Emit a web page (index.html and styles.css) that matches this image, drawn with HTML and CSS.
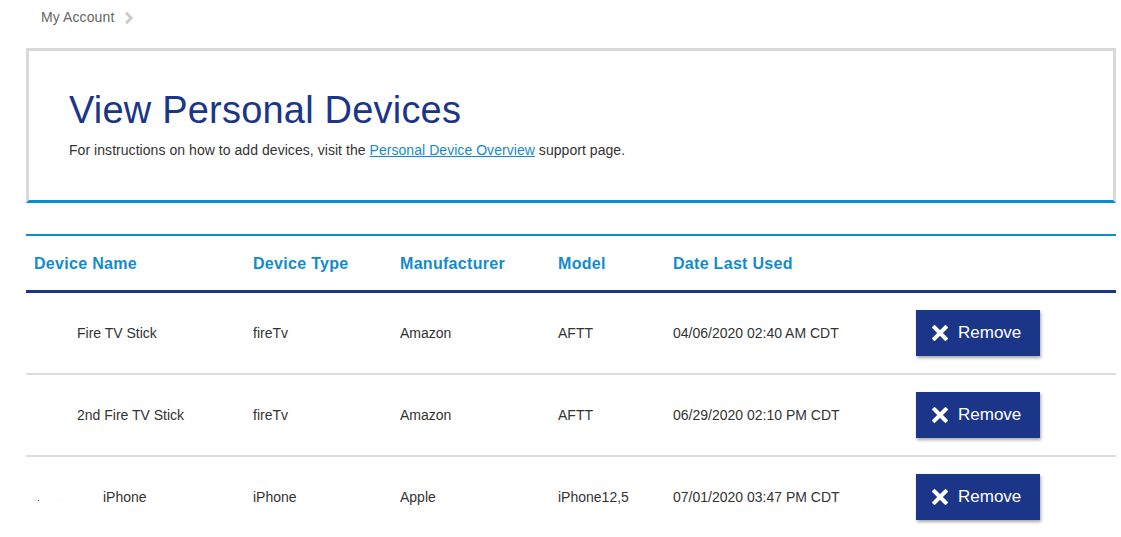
FILE: index.html
```html
<!DOCTYPE html>
<html lang="en">
<head>
<meta charset="utf-8">
<title>View Personal Devices</title>
<link rel="stylesheet" href="styles.css">
</head>
<body>
<div class="page">
  <nav class="crumbs">
    <a class="crumb" href="#">My Account</a>
    <svg class="chev" width="10" height="14" viewBox="0 0 10 14"><path d="M2 1.8 L7.2 7 L2 12.2" fill="none" stroke="#c9c9c9" stroke-width="2.8"/></svg>
  </nav>

  <section class="card">
    <h1 class="title">View Personal Devices</h1>
    <p class="intro">For instructions on how to add devices, visit the <a href="#" class="link">Personal Device Overview</a> support page.</p>
  </section>

  <div class="table">
    <div class="row head">
      <div class="cell first">Device Name</div>
      <div class="cell">Device Type</div>
      <div class="cell">Manufacturer</div>
      <div class="cell">Model</div>
      <div class="cell">Date Last Used</div>
      <div class="cell"></div>
    </div>
    <div class="row">
      <div class="cell name"><span class="thumb"></span>Fire TV Stick</div>
      <div class="cell">fireTv</div>
      <div class="cell">Amazon</div>
      <div class="cell">AFTT</div>
      <div class="cell">04/06/2020 02:40 AM CDT</div>
      <div class="cell"><button class="remove"><svg class="x" width="16" height="16" viewBox="0 0 16 16"><path d="M2.5 2.5 L13.5 13.5 M13.5 2.5 L2.5 13.5" stroke="#fff" stroke-width="4" stroke-linecap="square"/></svg>Remove</button></div>
    </div>
    <div class="row">
      <div class="cell name"><span class="thumb"></span>2nd Fire TV Stick</div>
      <div class="cell">fireTv</div>
      <div class="cell">Amazon</div>
      <div class="cell">AFTT</div>
      <div class="cell">06/29/2020 02:10 PM CDT</div>
      <div class="cell"><button class="remove"><svg class="x" width="16" height="16" viewBox="0 0 16 16"><path d="M2.5 2.5 L13.5 13.5 M13.5 2.5 L2.5 13.5" stroke="#fff" stroke-width="4" stroke-linecap="square"/></svg>Remove</button></div>
    </div>
    <div class="row">
      <div class="cell name"><span class="thumb wide"><i class="dot"></i><i class="dot faint"></i></span>iPhone</div>
      <div class="cell">iPhone</div>
      <div class="cell">Apple</div>
      <div class="cell">iPhone12,5</div>
      <div class="cell">07/01/2020 03:47 PM CDT</div>
      <div class="cell"><button class="remove"><svg class="x" width="16" height="16" viewBox="0 0 16 16"><path d="M2.5 2.5 L13.5 13.5 M13.5 2.5 L2.5 13.5" stroke="#fff" stroke-width="4" stroke-linecap="square"/></svg>Remove</button></div>
    </div>
  </div>
</div>
</body>
</html>
```

FILE: styles.css
```css
* { box-sizing: border-box; }
html, body { margin: 0; padding: 0; background: #fff; }
body {
  font-family: "Liberation Sans", Arial, sans-serif;
  color: #333;
  font-size: 14px;
}
.page { padding: 0 5px 0 26px; }

.crumbs {
  height: 34px;
  display: flex;
  align-items: center;
  gap: 10px;
  padding-left: 15px;
}
.crumb { color: #666; text-decoration: none; font-size: 14px; letter-spacing: 0.1px; }
.chev { display: block; margin-top: 1px; }

.card {
  margin-top: 14px;
  border: 3px solid #d9d9d9;
  border-bottom: 3px solid #0b8ccd;
  padding: 39px 40px 41px 40px;
}
.title {
  margin: 0;
  font-family: "Liberation Sans", Arial, sans-serif;
  font-weight: normal;
  font-size: 38px;
  line-height: 40px;
  color: #1b3689;
  letter-spacing: 0.2px;
}
.intro {
  margin: 11px 0 0;
  line-height: 18px;
  font-size: 14px;
  color: #333;
  letter-spacing: 0.05px;
}
.link { color: #1489d0; text-decoration: underline; }

.table {
  margin-top: 31px;
  border-top: 2px solid #0b8ccd;
}
.row {
  display: grid;
  grid-template-columns: 227px 147px 158px 115px 243px 1fr;
  align-items: center;
  height: 82px;
  border-bottom: 2px solid #dcdcdc;
}
.row:last-child { border-bottom: none; height: 80px; }
.row.head {
  height: 57px;
  border-bottom: 3px solid #1b3689;
}
.head .cell {
  color: #118bd0;
  font-weight: bold;
  font-size: 16px;
  letter-spacing: 0.3px;
  padding-top: 2px;
}
.head .first { padding-left: 8px; }
.cell { font-size: 14px; color: #333; white-space: nowrap; }
.name { display: flex; align-items: center; }
.thumb { display: inline-flex; align-items: center; width: 51px; height: 16px; }
.thumb.wide { width: 77px; padding-left: 12px; gap: 22px; }
.dot { display: block; width: 1px; height: 1px; background: #444; margin-top: 6px; }
.dot.faint { background: #e6e2b8; }

.remove {
  display: flex;
  align-items: center;
  gap: 10px;
  width: 124px;
  height: 46px;
  padding: 0 0 0 16px;
  border: none;
  background: #1b3689;
  color: #fff;
  font-family: "Liberation Sans", Arial, sans-serif;
  font-size: 17px;
  box-shadow: 1px 2px 3px rgba(0, 0, 0, 0.35);
  cursor: pointer;
}
.x { display: block; }
```
